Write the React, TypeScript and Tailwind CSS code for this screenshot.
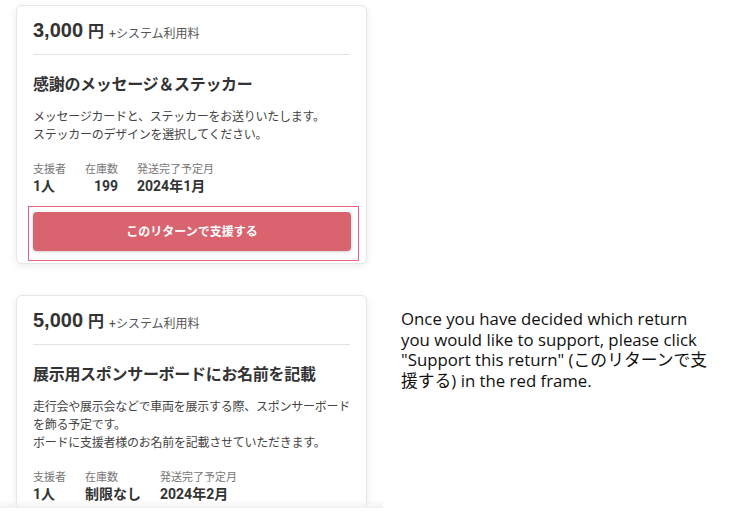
import React from 'react';

type Reward = {
  price: string;
  title: string;
  lines: string[];
  backers: string;
  stock: string;
  stockRight?: boolean;
  ship: string;
  button?: boolean;
};

const rewards: Reward[] = [
  {
    price: '3,000',
    title: '感謝のメッセージ＆ステッカー',
    lines: ['メッセージカードと、ステッカーをお送りいたします。', 'ステッカーのデザインを選択してください。'],
    backers: '1人',
    stock: '199',
    stockRight: true,
    ship: '2024年1月',
    button: true
  },
  {
    price: '5,000',
    title: '展示用スポンサーボードにお名前を記載',
    lines: ['走行会や展示会などで車両を展示する際、スポンサーボード', 'を飾る予定です。', 'ボードに支援者様のお名前を記載させていただきます。'],
    backers: '1人',
    stock: '制限なし',
    ship: '2024年2月'
  }
];

function RewardCard({ r }: { r: Reward }) {
  return (
    <div className="mx-4 rounded-md border border-[#e6e6e6] bg-white px-4 shadow-[0_2px_8px_rgba(0,0,0,0.08)]">
      <div className="flex h-[49px] items-end gap-[5px] border-b border-[#e2e2e2] pb-[14px]">
        <span className="font-['Liberation_Sans',sans-serif] text-[20px] font-bold leading-none text-[#333]">{r.price}</span>
        <span className="text-[16px] font-bold leading-none text-[#333]">円</span>
        <span className="text-[12px] leading-none text-[#555]">+システム利用料</span>
      </div>
      <div className="pt-[20px] text-[16px] font-bold leading-5 tracking-[-0.3px] text-[#333]">{r.title}</div>
      <div className="mt-[13px] whitespace-nowrap text-[12px] leading-[18px] tracking-[-0.25px] text-[#444]">
        {r.lines.map((l) => (
          <div key={l}>{l}</div>
        ))}
      </div>
      <div className="mt-[19px] flex gap-[19px]">
        <div className="flex flex-col">
          <span className="text-[11px] leading-[14px] text-[#777]">支援者</span>
          <span className="text-[14px] font-bold leading-[18px] text-[#333]">{r.backers}</span>
        </div>
        <div className="flex flex-col">
          <span className="text-[11px] leading-[14px] text-[#777]">在庫数</span>
          <span className={`text-[14px] font-bold leading-[18px] text-[#333] ${r.stockRight ? 'text-right' : ''}`}>{r.stock}</span>
        </div>
        <div className="flex flex-col">
          <span className="text-[11px] leading-[14px] text-[#777]">発送完了予定月</span>
          <span className="text-[14px] font-bold leading-[18px] text-[#333]">{r.ship}</span>
        </div>
      </div>
      {r.button ? (
        <div className="mt-[11px] mb-[2px] -ml-[5px] -mr-[9px] border border-[#f0607c] pt-[5px] pb-[9px] pl-[4px] pr-[7px]">
          <button className="flex h-[39px] w-full items-center justify-center rounded-[4px] bg-[#d9646f] text-[12px] font-bold text-white shadow-[0_1px_3px_rgba(0,0,0,0.2)]">
            このリターンで支援する
          </button>
        </div>
      ) : (
        <div className="h-8" />
      )}
    </div>
  );
}

export default function App() {
  return (
    <div
      className="flex h-[520px] w-[736px] bg-white"
      style={{ fontFamily: 'Roboto, "Noto Sans CJK JP", sans-serif' }}
    >
      <div className="relative h-[508px] w-[383px] shrink-0 overflow-hidden pt-[5px]">
        <RewardCard r={rewards[0]} />
        <div className="h-[31px]" />
        <RewardCard r={rewards[1]} />
        <div className="absolute bottom-0 left-0 h-2 w-full bg-gradient-to-b from-transparent to-[#f2f2f2]" />
      </div>
      <div
        className="whitespace-nowrap pl-[18px] pt-[309px] text-[16.8px] leading-[20.5px] text-[#111]"
        style={{ fontFamily: '"Open Sans", "Noto Sans CJK JP", sans-serif' }}
      >
        Once you have decided which return
        <br />
        you would like to support, please click
        <br />
        "Support this return" (このリターンで支
        <br />
        援する) in the red frame.
      </div>
    </div>
  );
}
